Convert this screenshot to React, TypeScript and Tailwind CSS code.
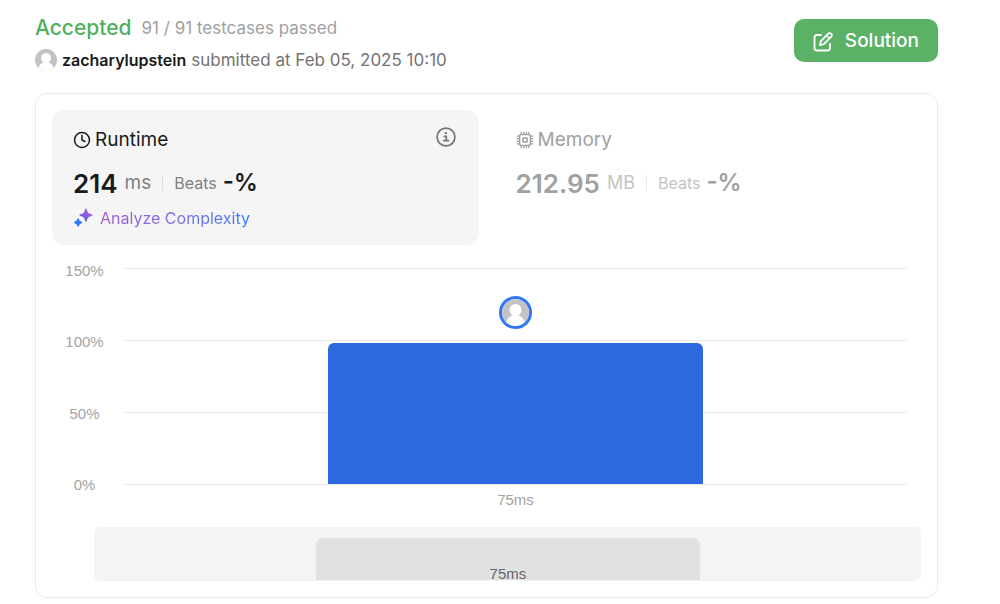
import { Clock } from "lucide-react";

const ticks = ["150%", "100%", "50%", "0%"];

function Avatar({ className }: { className: string }) {
  return (
    <svg viewBox="0 0 32 32" className={className} aria-hidden="true">
      <clipPath id="avatar-clip">
        <circle cx="16" cy="16" r="16" />
      </clipPath>
      <g clipPath="url(#avatar-clip)">
        <rect width="32" height="32" fill="#c3c3c3" />
        <circle cx="16" cy="13" r="7.2" fill="#fff" />
        <path d="M4.5 32c0-8 4.5-13 11.5-13s11.5 5 11.5 13z" fill="#fff" />
      </g>
    </svg>
  );
}

function PenIcon() {
  return (
    <svg
      viewBox="0 0 20 20"
      className="size-5"
      fill="none"
      stroke="currentColor"
      strokeWidth="1.8"
      strokeLinecap="round"
      strokeLinejoin="round"
      aria-hidden="true"
    >
      <path d="M8 3H3.900A2.400 2.400 0 0 0 1.500 5.400v10.700a2.400 2.400 0 0 0 2.400 2.400h10.700a2.400 2.400 0 0 0 2.400-2.400V12" />
      <path d="M15.300 1.700a1.900 1.900 0 0 1 2.700 0l.300.300a1.900 1.900 0 0 1 0 2.700l-7.400 7.400-4 1 1-4z" />
      <path d="M13.600 3.600l2.900 2.900" strokeWidth="1.400" />
    </svg>
  );
}

function ChipIcon() {
  return (
    <svg viewBox="0 0 18 18" className="size-[18px]" fill="none" stroke="currentColor" strokeLinecap="round" aria-hidden="true">
      <rect x="3.6" y="3.6" width="10.8" height="10.8" rx="1.8" strokeWidth="1.5" />
      <rect x="6.9" y="6.900" width="4.200" height="4.200" rx="0.300" strokeWidth="1.500" />
      <path
        d="M5.200 1.200v2M7.700 1.200v2M10.300 1.200v2M12.800 1.200v2M5.200 14.800v2M7.700 14.800v2M10.300 14.800v2M12.800 14.800v2M1.200 5.200h2M1.200 7.700h2M1.200 10.300h2M1.200 12.800h2M14.800 5.200h2M14.800 7.700h2M14.800 10.300h2M14.800 12.800h2"
        strokeWidth="1.200"
      />
    </svg>
  );
}

function InfoIcon() {
  return (
    <svg viewBox="0 0 20 20" className="size-5" fill="none" stroke="currentColor" aria-hidden="true">
      <circle cx="10" cy="10" r="8.9" strokeWidth="1.7" />
      <circle cx="9.9" cy="6.1" r="1.2" fill="currentColor" stroke="none" />
      <path d="M8.3 9.3h2v4.2M7.7 13.7h4.8" strokeWidth="1.7" strokeLinecap="round" strokeLinejoin="round" />
    </svg>
  );
}

function SparkleIcon() {
  return (
    <svg viewBox="0 0 20 20" className="size-5" aria-hidden="true">
      <defs>
        <linearGradient id="spark" x1="18" y1="0" x2="4" y2="17" gradientUnits="userSpaceOnUse">
          <stop offset="0.2" stopColor="#a15bd6" />
          <stop offset="0.5" stopColor="#7b5be0" />
          <stop offset="0.8" stopColor="#2f7bff" />
        </linearGradient>
      </defs>
      <path
        fill="url(#spark)"
        d="M12.3.9c.3-.7 1-.7 1.3 0l1.2 3.3c.2.5.5.8 1 1l3.2 1.2c.7.3.7 1.100 0 1.400l-3.200 1.200c-.5.200-.8.500-1 1l-1.200 3.300c-.3.700-1 .700-1.300 0l-1.200-3.300c-.2-.5-.5-.8-1-1L6.900 7.800c-.7-.3-.7-1.100 0-1.400l3.200-1.200c.5-.2.8-.5 1-1z"
      />
      <path
        fill="url(#spark)"
        d="M4.500 10.700c.3-.5.900-.5 1.200 0l.8 1.500c.2.400.5.700.9.900l1.500.8c.5.300.5.900 0 1.200l-1.500.8c-.4.200-.7.500-.9.900l-.8 1.500c-.3.500-.9.500-1.200 0l-.8-1.500c-.2-.4-.5-.7-.9-.9l-1.500-.8c-.5-.3-.5-.9 0-1.200l1.500-.8c.4-.2.700-.5.900-.9z"
      />
    </svg>
  );
}

export default function App() {
  return (
    <main className="min-h-screen bg-white pt-4 pr-[62px] pb-1 pl-[35px] font-['Inter','Liberation_Sans',sans-serif] text-[#1a1a1a]">
      <header className="flex items-start justify-between pt-[3px]">
        <div className="-mt-[3px]">
          <div className="flex items-center gap-[10px] leading-6">
            <h1 className="text-[21px] font-medium text-[#4fb05d]">Accepted</h1>
            <span className="text-[17px] text-[#a0a0a0]">91 / 91 testcases passed</span>
          </div>
          <div className="mt-2 flex items-center text-[17px] leading-6">
            <Avatar className="size-[22px]" />
            <span className="ml-[5px] text-base leading-6 font-semibold text-[#1a1a1a]">zacharylupstein</span>
            <span className="ml-[5px] text-[#737373]">submitted at Feb 05, 2025 10:10</span>
          </div>
        </div>
        <button type="button" className="flex h-[43px] items-center gap-3 rounded-[10px] bg-[#5bb166] px-[19px] pt-0.5 text-[19px] font-medium text-white">
          <PenIcon />
          Solution
        </button>
      </header>

      <section className="mt-[21px] rounded-[12px] border border-[#ebebeb] p-4">
        <div className="grid grid-cols-2 gap-4">
          <div className="flex h-[135px] flex-col rounded-[12px] bg-[#f5f5f5] pt-[17px] pr-[23px] pl-[21px]">
            <div className="flex items-start justify-between">
              <h2 className="flex h-[26px] items-center gap-1 text-[19px]">
                <Clock className="size-[18px]" strokeWidth={2} />
                Runtime
              </h2>
              <button type="button" aria-label="Runtime details" className="text-[#737373]">
                <InfoIcon />
              </button>
            </div>
            <div className="mt-[14px] flex h-8 items-center">
              <span className="text-[26px] font-semibold">214</span>
              <span className="ml-[7px] text-[19px] text-[#808080]">ms</span>
              <span className="mx-[11px] h-4 w-px bg-[#dedede]" />
              <span className="text-base text-[#808080]">Beats</span>
              <span className="ml-[6px] text-2xl font-semibold">-%</span>
            </div>
            <a href="#complexity" className="mt-[7px] flex h-6 items-center gap-[7px] text-base">
              <SparkleIcon />
              <span className="bg-linear-to-r from-[#a55bd3] to-[#2f7bff] bg-clip-text text-transparent">Analyze Complexity</span>
            </a>
          </div>

          <div className="flex h-[135px] flex-col px-[21px] pt-[17px] text-[#a1a1a1]">
            <h2 className="flex h-[26px] items-center gap-1 text-[19px]">
              <ChipIcon />
              Memory
            </h2>
            <div className="mt-[14px] flex h-8 items-center">
              <span className="text-[26px] font-semibold">212.95</span>
              <span className="ml-[7px] text-lg text-[#c4c4c4]">MB</span>
              <span className="mx-[11px] h-4 w-px bg-[#ececec]" />
              <span className="text-base text-[#c4c4c4]">Beats</span>
              <span className="ml-[6px] text-2xl font-semibold">-%</span>
            </div>
          </div>
        </div>

        <div className="mt-4 flex pr-[14px] font-['Liberation_Sans',sans-serif] text-[15px] text-[#a3a3a3]">
          <div className="flex h-[234px] w-[65px] flex-col items-center justify-between leading-5">
            {ticks.map((tick) => (
              <span key={tick}>{tick}</span>
            ))}
          </div>
          <div className="ml-[7px] flex-1 pt-[7px]">
            <div className="grid h-[217px]">
              <div className="col-start-1 row-start-1 flex flex-col justify-between">
                {ticks.map((tick) => (
                  <span key={tick} className="h-px bg-[#e9e9e9]" />
                ))}
              </div>
              <div className="z-10 col-start-1 row-start-1 flex flex-col items-center justify-end">
                <Avatar className="mb-[14px] size-[33px] rounded-full border-3 border-[#2f78f5]" />
                <div className="mb-px h-[141px] w-[48%] rounded-t-md bg-[#2c69df]" />
              </div>
            </div>
            <p className="mt-[5px] text-center leading-5">75ms</p>
          </div>
        </div>

        <div className="mt-[17px] ml-[42px] flex h-[54px] items-end rounded-md bg-[#f4f4f4] pb-px">
          <div className="ml-[26.8%] flex h-[42px] w-[46.5%] items-end justify-center rounded-t-md bg-[#e1e1e1] font-['Liberation_Sans',sans-serif] text-[15px] leading-3 text-[#666666]">
            75ms
          </div>
        </div>
      </section>
    </main>
  );
}
